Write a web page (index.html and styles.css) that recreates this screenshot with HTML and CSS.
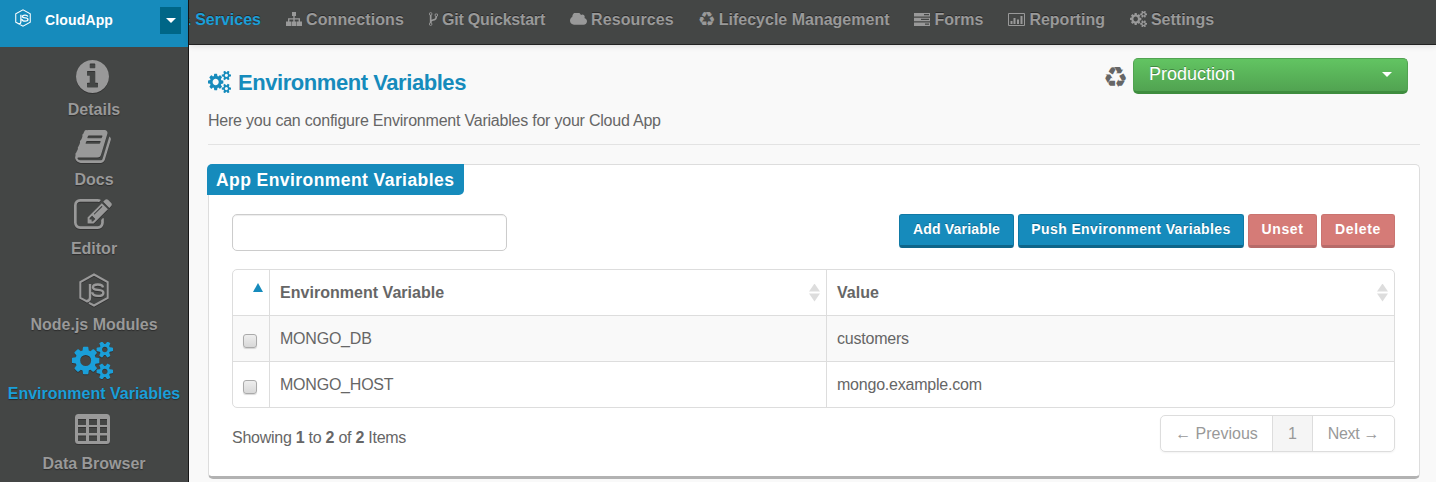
FILE: index.html
```
<!DOCTYPE html>
<html lang="en">
<head>
<meta charset="utf-8">
<title>Environment Variables</title>
<link rel="stylesheet" href="styles.css">
</head>
<body>
<svg class="defs" width="0" height="0">
  <symbol id="cogs" viewBox="0 36 1920 1720" preserveAspectRatio="none"><path d="M896 896q0-106-75-181t-181-75-181 75-75 181 75 181 181 75 181-75 75-181zm768 512q0-52-38-90t-90-38-90 38-38 90q0 53 37.500 90.500t90.500 37.500 90.500-37.500 37.500-90.500zm0-1024q0-52-38-90t-90-38-90 38-38 90q0 53 37.500 90.500t90.500 37.500 90.500-37.500 37.500-90.500zm-384 421v185q0 10-7 19.500t-16 10.500l-155 24q-11 35-32 76 34 48 90 115 7 11 7 20 0 12-7 19-23 30-82.500 89.500t-78.500 59.500q-11 0-21-7l-115-90q-37 19-77 31-11 108-23 155-7 24-30 24h-186q-11 0-20-7.500t-10-17.500l-23-153q-34-10-75-31l-118 89q-7 7-20 7-11 0-21-8-144-133-144-160 0-9 7-19 10-14 41-53t47-61q-23-44-35-82l-152-24q-10-1-17-9.500t-7-19.500v-185q0-10 7-19.500t16-10.500l155-24q11-35 32-76-34-48-90-115-7-11-7-20 0-12 7-20 22-30 82-89t79-59q11 0 21 7l115 90q34-18 77-32 11-108 23-154 7-24 30-24h186q11 0 20 7.500t10 17.500l23 153q34 10 75 31l118-89q8-7 20-7 11 0 21 8 144 133 144 160 0 8-7 19-12 16-42 54t-45 60q23 48 34 82l152 23q10 2 17 10.500t7 19.500zm640 533v140q0 16-149 31-12 27-30 52 51 113 51 138 0 4-4 7-122 71-124 71-8 0-46-47t-52-68q-20 2-30 2t-30-2q-14 21-52 68t-46 47q-2 0-124-71-4-3-4-7 0-25 51-138-18-25-30-52-149-15-149-31v-140q0-16 149-31 13-29 30-52-51-113-51-138 0-4 4-7 4-2 35-20t59-34 30-16q8 0 46 46.500t52 67.500q20-2 30-2t30 2q51-71 92-112l6-2q4 0 124 70 4 3 4 7 0 25-51 138 17 23 30 52 149 15 149 31zm0-1024v140q0 16-149 31-12 27-30 52 51 113 51 138 0 4-4 7-122 71-124 71-8 0-46-47t-52-68q-20 2-30 2t-30-2q-14 21-52 68t-46 47q-2 0-124-71-4-3-4-7 0-25 51-138-18-25-30-52-149-15-149-31v-140q0-16 149-31 13-29 30-52-51-113-51-138 0-4 4-7 4-2 35-20t59-34 30-16q8 0 46 46.500t52 67.500q20-2 30-2t30 2q51-71 92-112l6-2q4 0 124 70 4 3 4 7 0 25-51 138 17 23 30 52 149 15 149 31z"/></symbol>
  <symbol id="node" viewBox="0 0 30 34"><path fill="none" stroke="currentColor" stroke-width="2" d="M10 28 8 28.500 1.300 25V9L15 1.500 28.700 9v16L15 32.500 10 29.800"/><path fill="none" stroke="currentColor" stroke-width="2.400" d="M11 11v13.500q0 3.500-3.500 3.500M24 14.500q-.5-3-5.200-3-4.800 0-4.800 2.700 0 2.300 4.900 2.700 5.500.4 5.500 3 0 3-5.500 3-5.600 0-5.600-3.600"/></symbol>
</svg>
<div class="app">
  <aside class="sidebar">
    <div class="brand">
      <svg class="brand-icon"><use href="#node"/></svg>
      <span class="brand-name">CloudApp</span>
      <button class="brand-toggle"><i class="caret"></i></button>
    </div>
    <a class="side-item details"><svg viewBox="128 128 1536 1536"><path d="M1152 1376v-160q0-14-9-23t-23-9h-96v-512q0-14-9-23t-23-9h-320q-14 0-23 9t-9 23v160q0 14 9 23t23 9h96v320h-96q-14 0-23 9t-9 23v160q0 14 9 23t23 9h448q14 0 23-9t9-23zm-128-896v-160q0-14-9-23t-23-9h-192q-14 0-23 9t-9 23v160q0 14 9 23t23 9h192q14 0 23-9t9-23zm640 416q0 209-103 385.500t-279.500 279.500-385.500 103-385.500-103-279.500-279.500-103-385.500 103-385.500 279.500-279.500 385.500-103 385.500 103 279.500 279.500 103 385.500z"/></svg><span>Details</span></a>
    <a class="side-item docs"><svg viewBox="64 128 1664 1536"><path d="M1703 478q40 57 18 129l-275 906q-19 64-76.500 107.500t-122.500 43.500h-923q-77 0-148.500-53.500t-99.500-131.500q-24-67-2-127 0-4 3-27t4-37q1-8-3-21.500t-3-19.500q2-11 8-21t16.500-23.500 16.500-23.500q23-38 45-91.500t30-91.500q3-10 .5-30t-.5-28q3-11 17-28t17-23q21-36 42-92t25-90q1-9-2.500-32t.5-28q4-13 22-30.500t22-22.500q19-26 42.500-84.500t27.500-96.500q1-8-3-25.500t-2-26.500q2-8 9-18t18-23 17-21q8-12 16.500-30.500t15-35 16-36 19.500-32 26.500-23.500 36-11.500 47.500 5.500l-1 3q38-9 51-9h761q74 0 114 56t18 130l-274 906q-36 119-71.500 153.500t-128.500 34.500h-869q-27 0-38 15-11 16-1 43 24 70 144 70h923q29 0 56-15.500t35-41.500l300-987q7-22 5-57 38 15 59 43zm-1064 2q-4 13 2 22.500t20 9.500h608q13 0 25.500-9.500t16.500-22.500l21-64q4-13-2-22.500t-20-9.500h-608q-13 0-25.500 9.500t-16.500 22.500zm-83 256q-4 13 2 22.500t20 9.500h608q13 0 25.500-9.500t16.500-22.500l21-64q4-13-2-22.500t-20-9.500h-608q-13 0-25.500 9.500t-16.500 22.500z"/></svg><span>Docs</span></a>
    <a class="side-item editor"><svg viewBox="0 128 1792 1408"><path d="M888 1184l116-116-152-152-116 116v56h96v96h56zm440-720q-16-16-33 1l-350 350q-17 17-1 33t33-1l350-350q17-17 1-33zm80 594v190q0 119-84.500 203.500t-203.500 84.500h-832q-119 0-203.500-84.500t-84.500-203.500v-832q0-119 84.500-203.500t203.500-84.500h832q63 0 117 25 15 7 18 23 3 17-9 29l-49 49q-14 14-32 8-23-6-45-6h-832q-66 0-113 47t-47 113v832q0 66 47 113t113 47h832q66 0 113-47t47-113v-126q0-13 9-22l64-64q15-15 35-7t20 29zm-96-738l288 288-672 672h-288v-288zm444 132l-92 92-288-288 92-92q28-28 68-28t68 28l152 152q28 28 28 68t-28 68z"/></svg><span>Editor</span></a>
    <a class="side-item modules"><svg><use href="#node"/></svg><span>Node.js Modules</span></a>
    <a class="side-item envvars active"><svg><use href="#cogs"/></svg><span>Environment Variables</span></a>
    <a class="side-item browser"><svg viewBox="0 0 35 30"><path fill-rule="evenodd" d="M3.500 0h28Q35 0 35 3.500v23Q35 30 31.500 30h-28Q0 30 0 26.500v-23Q0 0 3.500 0zM3 5v6h8V5zm11 0v6h8V5zm11 0v6h7V5zM3 13v6h8v-6zm11 0v6h8v-6zm11 0v6h7v-6zM3 21.500V27h8v-5.500zm11 0V27h8v-5.500zm11 0V27h7v-5.500z"/></svg><span>Data Browser</span></a>
  </aside>
  <div class="page">
    <nav class="topnav">
      <a class="nav-item services active"><span>&amp; Services</span></a>
      <a class="nav-item connections"><svg viewBox="0 0 16 14"><path d="M6 0h4v4H8.700v2.300H14v3.200h2V14h-5V9.500h1.600V7.600H8.700v1.900h1.800V14h-5V9.500h1.800V7.600H3.400v1.900H5V14H0V9.500h2V6.300h5.300V4H6z"/></svg><span>Connections</span></a>
      <a class="nav-item git"><svg viewBox="384 128 1024 1536"><path d="M672 1472q0-40-28-68t-68-28-68 28-28 68 28 68 68 28 68-28 28-68zm0-1152q0-40-28-68t-68-28-68 28-28 68 28 68 68 28 68-28 28-68zm640 128q0-40-28-68t-68-28-68 28-28 68 28 68 68 28 68-28 28-68zm96 0q0 52-26 96.500t-70 69.500q-2 287-226 414-67 38-203 81-128 40-169.500 71t-41.500 100v26q44 25 70 69.500t26 96.500q0 80-56 136t-136 56-136-56-56-136q0-52 26-96.500t70-69.500v-820q-44-25-70-69.500t-26-96.500q0-80 56-136t136-56 136 56 56 136q0 52-26 96.500t-70 69.500v497q54-26 154-57 55-17 87.500-29.500t70.500-31 59-39.500 40.500-51 28-69.500 8.500-91.500q-44-25-70-69.500t-26-96.500q0-80 56-136t136-56 136 56 56 136z"/></svg><span>Git Quickstart</span></a>
      <a class="nav-item resources"><svg viewBox="64 256 1920 1280"><path d="M1984 1152q0 159-112.500 271.500t-271.500 112.500h-1088q-185 0-316.500-131.500t-131.500-316.500q0-132 71-241.500t187-163.500q-2-28-2-43 0-212 150-362t362-150q158 0 286.500 88t187.500 230q70-62 166-62 106 0 181 75t75 181q0 75-41 138 129 30 213 134.500t84 239.500z"/></svg><span>Resources</span></a>
      <a class="nav-item lifecycle"><i class="recycle">♻</i><span>Lifecycle Management</span></a>
      <a class="nav-item forms"><svg viewBox="0 0 16 13"><path fill-rule="evenodd" d="M0 0h16v3.500H0zM10 1v1.300h5V1zM0 4.700h16v3.500H0zm7 1V7h8V5.700zM0 9.400h16v3.500H0zm11 1v1.300h4v-1.300z"/></svg><span>Forms</span></a>
      <a class="nav-item reporting"><svg viewBox="0 0 17 13"><path fill-rule="evenodd" d="M1 0h15q1 0 1 1v11q0 1-1 1H1q-1 0-1-1V1q0-1 1-1zm0 1v11h15V1zm1.500 7h2v3h-2zm3-3h2v6h-2zm3.500 1.500h2V11H9zM12.500 3h2v8h-2z"/></svg><span>Reporting</span></a>
      <a class="nav-item settings"><svg><use href="#cogs"/></svg><span>Settings</span></a>
    </nav>
    <main class="content">
      <header class="page-head">
        <div class="headline">
          <h1><svg><use href="#cogs"/></svg><span>Environment Variables</span></h1>
          <p>Here you can configure Environment Variables for your Cloud App</p>
        </div>
        <div class="env-picker">
          <i class="recycle">♻</i>
          <button class="env-button"><span>Production</span><i class="caret"></i></button>
        </div>
      </header>
      <section class="panel">
        <h2>App Environment Variables</h2>
        <div class="panel-body">
          <div class="toolbar">
            <input class="search" type="text">
            <div class="buttons">
              <button class="btn add">Add Variable</button>
              <button class="btn push">Push Environment Variables</button>
              <button class="btn danger unset">Unset</button>
              <button class="btn danger delete">Delete</button>
            </div>
          </div>
          <div class="table">
            <div class="row head">
              <div class="cell check"><i class="up"></i></div>
              <div class="cell name"><b>Environment Variable</b><i class="sort"></i></div>
              <div class="cell value"><b>Value</b><i class="sort"></i></div>
            </div>
            <div class="row odd">
              <div class="cell check"><i class="checkbox"></i></div>
              <div class="cell name"><span>MONGO_DB</span></div>
              <div class="cell value"><span>customers</span></div>
            </div>
            <div class="row">
              <div class="cell check"><i class="checkbox"></i></div>
              <div class="cell name"><span>MONGO_HOST</span></div>
              <div class="cell value"><span>mongo.example.com</span></div>
            </div>
          </div>
          <div class="table-foot">
            <span class="summary">Showing <b>1</b> to <b>2</b> of <b>2</b> Items</span>
            <div class="pager"><a class="prev">← Previous</a><a class="current">1</a><a class="next">Next →</a></div>
          </div>
        </div>
      </section>
    </main>
  </div>
</div>
</body>
</html>
```
FILE: styles.css
```
* { box-sizing: border-box; }
body { margin: 0; height: 482px; overflow: hidden; background: #f9f9f9; color: #666; font: 16px/20px "Liberation Sans", Arial, sans-serif; }
.defs { position: absolute; }
svg { fill: currentColor; flex: none; display: block; }
i { font-style: normal; }
button { border: 0; padding: 0; font-family: inherit; }
.app { display: flex; height: 482px; }
.caret { display: block; width: 0; height: 0; border: 5px solid transparent; border-top-color: #fff; border-bottom: 0; }

.sidebar { flex: none; width: 189px; background: #444645; border-right: 1px solid #161616; }
.brand { display: flex; height: 47px; background: #168bbc; color: #fff; padding: 7px 7px 0 15px; }
.brand-icon { width: 16px; height: 18px; margin-top: 2px; }
.brand-name { font-weight: bold; font-size: 14px; line-height: 26px; margin-left: 14px; letter-spacing: .15px; }
.brand-toggle { width: 21px; height: 27px; background: #006687; margin-left: auto; display: flex; justify-content: center; align-items: center; }
.side-item { display: flex; flex-direction: column; align-items: center; justify-content: flex-end; height: 70px; color: #999; font-weight: bold; white-space: nowrap; text-shadow: 0 1px 1px #2c2c2c; }
.side-item svg { filter: drop-shadow(0 1px 0 #333); }
.side-item span { line-height: 22px; height: 20px; }
.side-item.active { color: #1a9fd9; }
.details { height: 72px; }
.details svg { width: 33px; height: 33px; margin: 0 3px 6px 0; }
.docs svg { width: 36px; height: 33px; margin: 0 3px 6px 0; }
.editor { height: 69px; }
.editor svg { width: 38px; height: 30px; margin: 0 2px 9px 0; }
.modules { height: 76px; }
.modules svg { width: 30px; height: 34px; margin: 0 1px 7px 0; }
.envvars { height: 69px; }
.envvars svg { width: 41px; height: 37px; margin: 0 3px 4px 0; }
.browser svg { width: 35px; height: 30px; margin: 0 3px 9px 0; }

.page { flex: 1; min-width: 0; }
.topnav { display: flex; height: 45px; background: #444645; border-bottom: 1px solid #222; box-shadow: 0 1px 6px rgba(0,0,0,.12); color: #999; font-weight: bold; gap: 25px; padding-top: 9px; }
.nav-item { display: flex; gap: 4px; height: 20px; align-items: center; white-space: nowrap; text-shadow: 0 -1px 0 #2a2a2a; flex: none; }
.nav-item span { line-height: 22px; height: 20px; }
.nav-item.active { color: #1a9fd9; }
.services { width: 72px; justify-content: flex-end; overflow: hidden; }
.connections { letter-spacing: .1px; }
.connections svg { width: 16px; height: 14px; }
.git { letter-spacing: -.2px; }
.git svg { width: 9px; height: 14px; }
.resources { letter-spacing: .1px; }
.resources svg { width: 17px; height: 12px; }
.forms svg { width: 16px; height: 13px; }
.reporting svg { width: 17px; height: 13px; }
.settings svg { width: 17px; height: 16px; }
.recycle { font-family: "DejaVu Sans", sans-serif; font-weight: normal; }
.lifecycle .recycle { width: 16px; font-size: 20px; display: flex; justify-content: center; text-shadow: none; }

.content { padding: 13px 16px 0 19px; }
.page-head { display: flex; justify-content: space-between; height: 87px; border-bottom: 1px solid #e3e3e3; padding-right: 12px; }
h1 { display: flex; align-items: center; gap: 7px; margin: 9px 0 0; height: 30px; font-size: 22px; letter-spacing: -.44px; color: #168bbc; }
h1 span { padding-top: 2px; }
h1 svg { width: 23px; height: 22px; }
.headline p { margin: 14px 0 0; white-space: nowrap; letter-spacing: -.22px; }
.env-picker { display: flex; }
.env-picker .recycle { font-size: 28px; line-height: 39px; width: 30px; }
.env-button { display: flex; justify-content: space-between; width: 275px; height: 36px; border: 1px solid #51a351; border-bottom: 3px solid #3f8d3f; border-radius: 5px; background: linear-gradient(#62c462, #51a351); color: #fff; font-size: 18px; line-height: 31px; padding: 0 15px; text-shadow: 0 -1px 0 rgba(0,0,0,.3); }
.env-button .caret { margin-top: 13px; }

.panel { margin-top: 19px; height: 315px; border: 1px solid #ddd; border-bottom: 3px solid #b2b2b2; border-radius: 5px; background: #fff; }
h2 { margin: -1px 0 0 -2px; width: 257px; height: 31px; background: #168bbc; color: #fff; border-radius: 5px 0 5px 0; font-size: 17.5px; line-height: 32px; padding-left: 9px; white-space: nowrap; letter-spacing: .43px; }
.panel-body { padding: 19px 24px 0 23px; }
.toolbar { display: flex; justify-content: space-between; height: 37px; }
.search { width: 275px; height: 37px; border: 1px solid #ccc; border-radius: 5px; background: #fff; box-shadow: inset 0 1px 1px rgba(0,0,0,.075); }
.buttons { display: flex; gap: 4px; }
.btn { height: 34px; border: 1px solid #117aa6; border-bottom: 3px solid #0e6589; border-radius: 3px; background: #168bbc; color: #fff; font-weight: bold; font-size: 14px; line-height: 26px; padding-bottom: 3px; text-shadow: 0 -1px 0 rgba(0,0,0,.25); white-space: nowrap; }
.add { width: 115px; letter-spacing: .2px; }
.push { width: 226px; letter-spacing: .4px; }
.unset { width: 69px; letter-spacing: .6px; }
.delete { width: 74px; letter-spacing: .7px; }
.danger { background: #d57b77; border-color: #ca7470; border-bottom-color: #b76b69; text-shadow: none; }
.table { margin-top: 18px; border: 1px solid #ddd; border-radius: 5px; overflow: hidden; letter-spacing: -.22px; }
.row { display: flex; height: 46px; border-bottom: 1px solid #ddd; }
.row:last-child { height: 45px; border-bottom: 0; }
.head { letter-spacing: .03px; }
.odd { background: #f9f9f9; }
.cell { display: flex; align-items: center; justify-content: space-between; padding: 0 6px 0 10px; border-right: 1px solid #ddd; }
.check { width: 37px; }
.name { width: 557px; }
.value { flex: 1; border-right: 0; }
.up { width: 0; height: 0; border: 5px solid transparent; border-bottom: 9px solid #168bbc; border-top: 0; margin: -10px 0 0 10px; }
.sort { width: 11px; height: 18px; background: #ddd; clip-path: polygon(50% 0, 100% 45%, 0 45%, 0 55%, 100% 55%, 50% 100%, 0 55%, 0 45%); }
.checkbox { width: 14px; height: 14px; margin-top: 5px; border: 1px solid #aaa; border-radius: 3px; background: linear-gradient(#eee, #d8d8d8); box-shadow: 0 1px 1px rgba(0,0,0,.15); }
.table-foot { display: flex; justify-content: space-between; margin-top: 7px; height: 37px; }
.summary { padding-top: 13px; letter-spacing: -.26px; }
.pager { display: flex; height: 37px; border: 1px solid #ddd; border-radius: 5px; color: #999; line-height: 35px; text-align: center; overflow: hidden; box-shadow: 0 1px 2px rgba(0,0,0,.05); white-space: nowrap; }
.prev { width: 112px; border-right: 1px solid #ddd; }
.current { width: 40px; background: #f5f5f5; border-right: 1px solid #ddd; }
.next { width: 81px; letter-spacing: -.3px; }
```
